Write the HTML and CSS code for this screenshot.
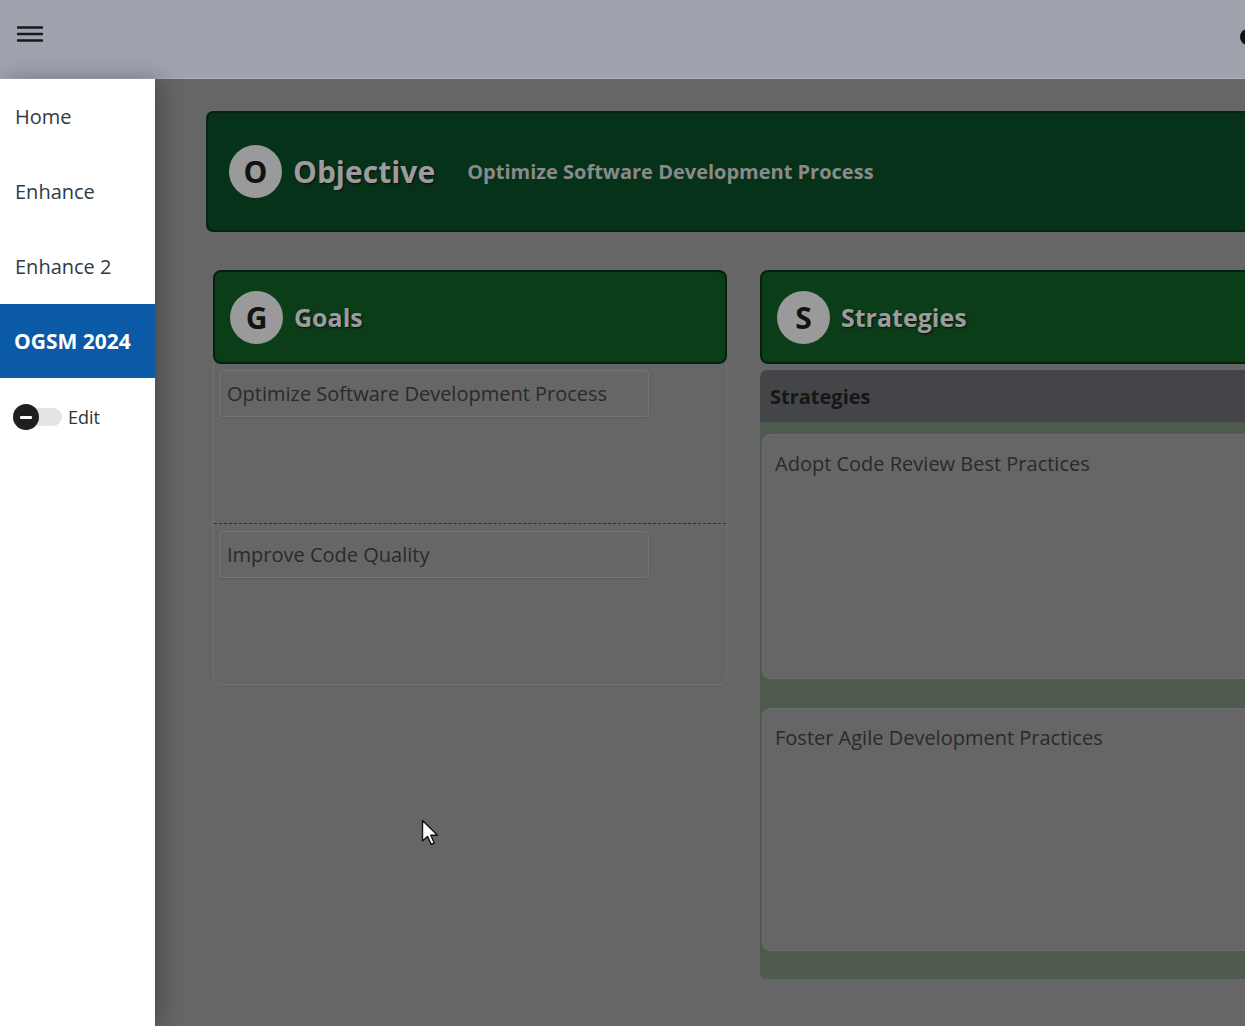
FILE: index.html
```html
<!DOCTYPE html>
<html lang="en">
<head>
<meta charset="utf-8">
<title>OGSM 2024</title>
<link rel="stylesheet" href="styles.css">
</head>
<body>
<header class="topbar">
  <button class="menu-btn" aria-label="Menu">
    <svg width="26" height="18" viewBox="0 0 26 18"><path d="M1 2.5h24M1 9h24M1 15.5h24" stroke="#16181c" stroke-width="2.6" stroke-linecap="round" fill="none"/></svg>
  </button>
  <span class="user-icon"></span>
</header>
<div class="layout">
  <nav class="sidebar">
    <a class="nav-item">Home</a>
    <a class="nav-item">Enhance</a>
    <a class="nav-item">Enhance 2</a>
    <a class="nav-item active">OGSM 2024</a>
    <label class="edit-toggle">
      <span class="switch"><span class="knob"></span></span>
      <span>Edit</span>
    </label>
  </nav>
  <main class="content">
    <section class="objective">
      <span class="badge badge-lg">O</span>
      <h1 class="objective-title">Objective</h1>
      <span class="objective-text">Optimize Software Development Process</span>
    </section>
    <div class="columns">
      <section class="col">
        <div class="col-head">
          <span class="badge">G</span>
          <h2 class="col-title">Goals</h2>
        </div>
        <div class="goal-body">
          <div class="goal-row"><div class="goal-card">Optimize Software Development Process</div></div>
          <div class="goal-row"><div class="goal-card">Improve Code Quality</div></div>
        </div>
      </section>
      <section class="col">
        <div class="col-head">
          <span class="badge">S</span>
          <h2 class="col-title">Strategies</h2>
        </div>
        <div class="strat-panel">
          <div class="strat-title">Strategies</div>
          <div class="strat-list">
            <div class="strat-card">Adopt Code Review Best Practices</div>
            <div class="strat-card">Foster Agile Development Practices</div>
          </div>
        </div>
      </section>
    </div>
  </main>
</div>
<svg class="cursor" width="18" height="28" viewBox="0 0 18 28"><path d="M1.5 1.5v20.5l5-4.6 3.6 8 3.2-1.4-3.5-7.8h6.7z" fill="#fff" stroke="#111" stroke-width="1.4" stroke-linejoin="round"/></svg>
</body>
</html>
```
FILE: styles.css
```css
* { box-sizing: border-box; }
html, body { margin: 0; height: 100%; }
body {
  font-family: "Open Sans", "Noto Sans", sans-serif;
  background: #666666;
  overflow: hidden;
  width: 1245px;
  height: 1026px;
  position: relative;
}
.topbar {
  height: 79px;
  background: #9ea3ae;
  border-bottom: 1px solid #aab0bb;
  display: flex;
  align-items: center;
  justify-content: space-between;
  padding-left: 17px;
}
.menu-btn {
  background: none;
  border: 0;
  padding: 0;
  margin-top: -11px;
  display: flex;
}
.user-icon {
  width: 16px;
  height: 16px;
  border-radius: 50%;
  background: #111;
  margin-right: -11px;
  margin-top: -4px;
}
.layout {
  display: flex;
  height: calc(100% - 79px);
}
.sidebar {
  width: 155px;
  flex: none;
  background: #fff;
  display: flex;
  flex-direction: column;
  box-shadow: 6px 0 22px rgba(0,0,0,0.28);
  position: relative;
  z-index: 1;
}
.nav-item {
  height: 75px;
  display: flex;
  align-items: center;
  padding-left: 15px;
  font-size: 20px;
  color: #2f3b45;
}
.nav-item.active {
  background: #0b5aa8;
  color: #fff;
  font-weight: 700;
  font-size: 21px;
  height: 74px;
  padding-left: 14px;
}
.edit-toggle {
  height: 78px;
  display: flex;
  align-items: center;
  padding-left: 14px;
  gap: 6px;
  font-size: 18px;
  color: #333;
}
.switch {
  width: 48px;
  height: 18px;
  border-radius: 9px;
  background: #e4e4e4;
  position: relative;
  display: flex;
  align-items: center;
}
.knob {
  width: 26px;
  height: 26px;
  border-radius: 50%;
  background: #1f1f1f;
  position: relative;
  margin-left: -1px;
}
.knob::after {
  content: "";
  position: absolute;
  left: 7px;
  right: 7px;
  top: 11.5px;
  height: 3px;
  background: #fff;
  border-radius: 1px;
}
.content {
  flex: 1;
  padding: 32px 0 0 51px;
  overflow: hidden;
}
.objective {
  width: 1400px;
  height: 121px;
  background: #07321a;
  border: 2px solid #06240f;
  border-radius: 7px;
  display: flex;
  align-items: center;
  padding-left: 21px;
}
.badge {
  width: 53px;
  height: 53px;
  border-radius: 50%;
  background: #9a9a9a;
  color: #121212;
  font-weight: 700;
  font-size: 30px;
  display: flex;
  align-items: center;
  justify-content: center;
  flex: none;
}
.objective-title {
  margin: 0 0 0 11px;
  font-size: 30px;
  font-weight: 700;
  color: #9c9c9c;
  text-shadow: 1px 1px 2px #0c0c0c;
}
.objective-text {
  margin-left: 32px;
  font-size: 20px;
  font-weight: 700;
  color: #8a8a8a;
}
.columns {
  display: grid;
  grid-template-columns: 514px 514px;
  gap: 33px;
  padding: 38px 0 0 7px;
  align-items: start;
}
.col { display: flex; flex-direction: column; }
.col-head {
  height: 94px;
  background: #0b3d19;
  border: 2px solid #06200d;
  border-radius: 8px;
  display: flex;
  align-items: center;
  padding-left: 15px;
}
.col-title {
  margin: 0 0 0 11px;
  font-size: 25px;
  font-weight: 700;
  color: #9c9c9c;
  text-shadow: 1px 1px 2px #0c0c0c;
}
.goal-body {
  border: 1px solid #717171;
  border-top: 0;
  border-radius: 0 0 8px 8px;
}
.goal-row {
  height: 159px;
  padding: 6px 0 0 5px;
}
.goal-row + .goal-row {
  border-top: 1px dashed #2e2e2e;
  height: 161px;
  padding-top: 7px;
}
.goal-card {
  width: 430px;
  height: 47px;
  border: 1px solid #757575;
  border-radius: 4px;
  padding-left: 7px;
  display: flex;
  align-items: center;
  font-size: 20px;
  color: #2a2a2a;
  box-shadow: 0 1px 2px rgba(0,0,0,0.12);
}
.strat-panel {
  margin-top: 6px;
  background: #4f5a4f;
  border-radius: 7px;
  overflow: hidden;
  padding-bottom: 28px;
}
.strat-title {
  height: 52px;
  background: #444548;
  display: flex;
  align-items: center;
  padding-left: 10px;
  font-size: 20px;
  font-weight: 700;
  color: #161616;
}
.strat-list {
  display: flex;
  flex-direction: column;
  gap: 29px;
  padding: 12px 0 0 2px;
}
.strat-card {
  height: 245px;
  background: #666666;
  border: 1px solid #6e6e6e;
  border-radius: 8px;
  padding: 15px 0 0 12px;
  font-size: 20px;
  color: #2a2a2a;
}
.strat-card + .strat-card { height: 243px; }
.cursor {
  position: absolute;
  left: 421px;
  top: 819px;
}
```
